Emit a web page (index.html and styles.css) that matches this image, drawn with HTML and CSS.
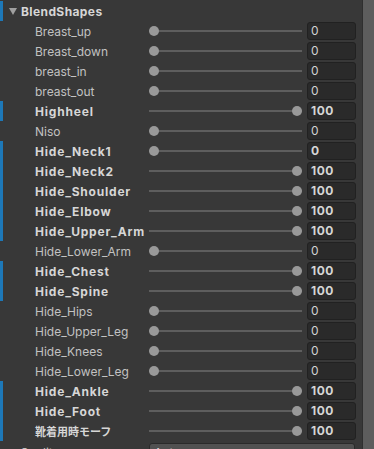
FILE: index.html
```html
<!DOCTYPE html>
<html>
<head>
<meta charset="utf-8">
<link rel="stylesheet" href="styles.css">
</head>
<body>
<div class="inspector">
  <div class="content">
    <div class="row header over">
      <span class="foldout"></span>
      <span class="title">BlendShapes</span>
    </div>
    <div class="row"><span class="label">Breast_up</span><div class="slider"><div class="track"></div><div class="knob min"></div></div><div class="field">0</div></div>
    <div class="row"><span class="label">Breast_down</span><div class="slider"><div class="track"></div><div class="knob min"></div></div><div class="field">0</div></div>
    <div class="row"><span class="label">breast_in</span><div class="slider"><div class="track"></div><div class="knob min"></div></div><div class="field">0</div></div>
    <div class="row"><span class="label">breast_out</span><div class="slider"><div class="track"></div><div class="knob min"></div></div><div class="field">0</div></div>
    <div class="row over"><span class="label">Highheel</span><div class="slider"><div class="track"></div><div class="knob max"></div></div><div class="field">100</div></div>
    <div class="row"><span class="label">Niso</span><div class="slider"><div class="track"></div><div class="knob min"></div></div><div class="field">0</div></div>
    <div class="row over"><span class="label">Hide_Neck1</span><div class="slider"><div class="track"></div><div class="knob min"></div></div><div class="field">0</div></div>
    <div class="row over"><span class="label">Hide_Neck2</span><div class="slider"><div class="track"></div><div class="knob max"></div></div><div class="field">100</div></div>
    <div class="row over"><span class="label">Hide_Shoulder</span><div class="slider"><div class="track"></div><div class="knob max"></div></div><div class="field">100</div></div>
    <div class="row over"><span class="label">Hide_Elbow</span><div class="slider"><div class="track"></div><div class="knob max"></div></div><div class="field">100</div></div>
    <div class="row over"><span class="label">Hide_Upper_Arm</span><div class="slider"><div class="track"></div><div class="knob max"></div></div><div class="field">100</div></div>
    <div class="row"><span class="label">Hide_Lower_Arm</span><div class="slider"><div class="track"></div><div class="knob min"></div></div><div class="field">0</div></div>
    <div class="row over"><span class="label">Hide_Chest</span><div class="slider"><div class="track"></div><div class="knob max"></div></div><div class="field">100</div></div>
    <div class="row over"><span class="label">Hide_Spine</span><div class="slider"><div class="track"></div><div class="knob max"></div></div><div class="field">100</div></div>
    <div class="row"><span class="label">Hide_Hips</span><div class="slider"><div class="track"></div><div class="knob min"></div></div><div class="field">0</div></div>
    <div class="row"><span class="label">Hide_Upper_Leg</span><div class="slider"><div class="track"></div><div class="knob min"></div></div><div class="field">0</div></div>
    <div class="row"><span class="label">Hide_Knees</span><div class="slider"><div class="track"></div><div class="knob min"></div></div><div class="field">0</div></div>
    <div class="row"><span class="label">Hide_Lower_Leg</span><div class="slider"><div class="track"></div><div class="knob min"></div></div><div class="field">0</div></div>
    <div class="row over"><span class="label">Hide_Ankle</span><div class="slider"><div class="track"></div><div class="knob max"></div></div><div class="field">100</div></div>
    <div class="row over"><span class="label">Hide_Foot</span><div class="slider"><div class="track"></div><div class="knob max"></div></div><div class="field">100</div></div>
    <div class="row over"><span class="label cjk">靴着用時モーフ</span><div class="slider"><div class="track"></div><div class="knob max"></div></div><div class="field">100</div></div>
    <div class="row quality"><span class="label">Quality</span><div class="dropdown">Auto</div></div>
  </div>
  <div class="scrollbar"></div>
</div>
</body>
</html>
```
FILE: styles.css
```css
html, body {
  margin: 0;
  padding: 0;
  background: #383838;
  overflow: hidden;
}
body {
  font-family: Inter, "Noto Sans CJK JP", sans-serif;
  font-size: 12px;
  color: #c4c4c4;
}
.inspector {
  display: flex;
  width: 374px;
  height: 449px;
}
.content {
  flex: 1;
  padding-top: 1px;
}
.scrollbar {
  width: 11px;
  background: #5d5d5d;
  border-left: 1px solid #2f2f2f;
}
.row {
  height: 20px;
  display: grid;
  grid-template-columns: 141px 153px 49px;
  column-gap: 5px;
  align-items: center;
  border-left: 3px solid transparent;
}
.row.over {
  border-left-color: #1d78b8;
}
.row .label {
  padding-left: 32px;
  color: #c2c2c2;
  white-space: nowrap;
}
.row.over .label {
  font-weight: 700;
  color: #d6d6d6;
  letter-spacing: 0.8px;
}
.row.over .label.cjk {
  letter-spacing: 0;
  font-size: 11px;
}
.row.over .field {
  font-weight: 700;
  color: #d6d6d6;
  letter-spacing: 0.5px;
}
.header {
  display: flex;
  align-items: center;
  column-gap: 0;
}
.foldout {
  width: 0;
  height: 0;
  border-left: 4px solid transparent;
  border-right: 4px solid transparent;
  border-top: 7px solid #a0a0a0;
  margin-left: 6px;
  margin-right: 4px;
  margin-top: 1px;
}
.title {
  font-weight: 700;
  font-size: 12px;
  letter-spacing: 0.4px;
  color: #d6d6d6;
}
.slider {
  position: relative;
  height: 20px;
}
.track {
  position: absolute;
  left: 0;
  right: 0;
  top: 9px;
  height: 2px;
  background: #5e5e5e;
}
.knob {
  position: absolute;
  top: 5px;
  width: 10px;
  height: 10px;
  border-radius: 50%;
  background: #999999;
}
.knob.min {
  left: 0;
}
.knob.max {
  right: 0;
}
.field {
  height: 16px;
  line-height: 16px;
  background: #2a2a2a;
  border: 1px solid #212121;
  border-radius: 3px;
  padding-left: 3px;
  color: #d2d2d2;
}
.quality {
  grid-template-columns: 141px 206px;
}
.quality .label {
  padding-left: 17px;
}
.dropdown {
  height: 18px;
  margin-top: 2px;
  align-self: start;
  background: #515151;
  border: 1px solid #2a2a2a;
  border-radius: 3px;
  padding-left: 4px;
  color: #d2d2d2;
  line-height: 18px;
}
```
